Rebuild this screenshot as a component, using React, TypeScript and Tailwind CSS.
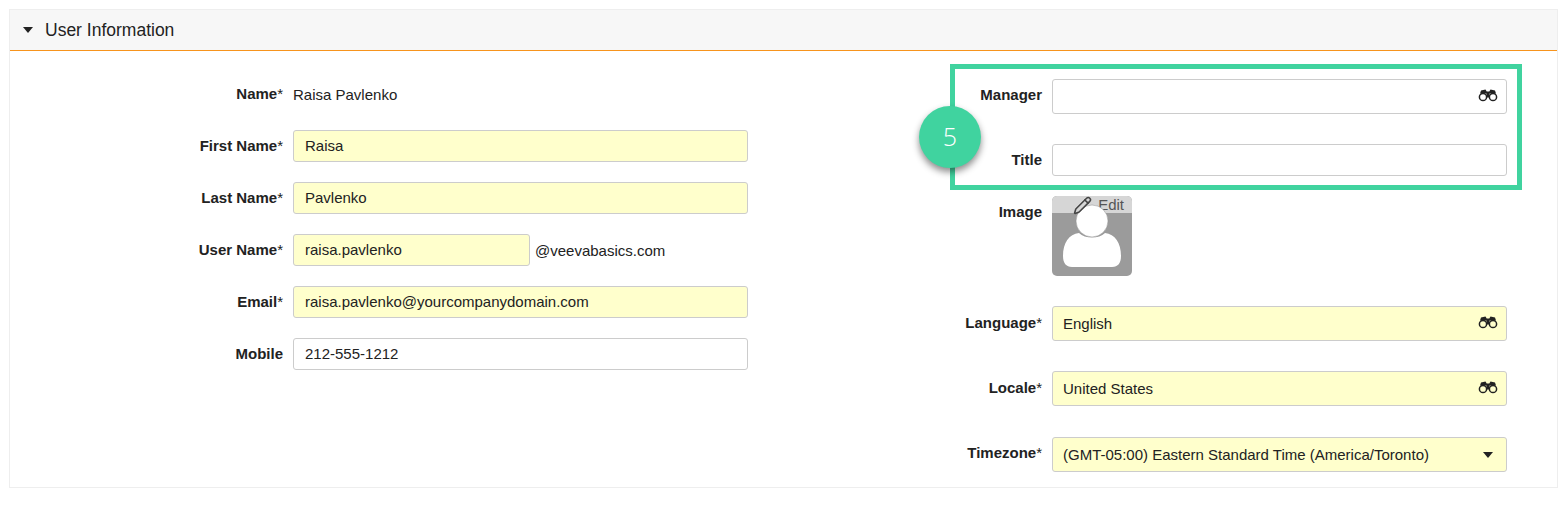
import React from "react";
import { Pencil } from "lucide-react";

function Binoculars() {
  return (
    <svg width="20" height="14" viewBox="0 0 20 14" className="absolute right-[8px] top-[9px] text-[#222]">
      <path d="M3 1.5 L7.5 0.5 L8.7 2.5 L11.3 2.5 L12.5 0.5 L17 1.5 L18 4.5 L2 4.5 Z" fill="currentColor" />
      <rect x="8.5" y="4" width="3" height="4.5" fill="currentColor" />
      <circle cx="5" cy="8" r="3.6" fill="none" stroke="currentColor" strokeWidth="1.5" />
      <circle cx="15" cy="8" r="3.6" fill="none" stroke="currentColor" strokeWidth="1.5" />
    </svg>
  );
}

function Caret() {
  return <span className="absolute right-[13px] top-[14px] w-0 h-0 border-x-[5px] border-x-transparent border-t-[6px] border-t-[#222]" />;
}

function Label({ text, required, width, shift = "pb-[2px]" }: { text: string; required?: boolean; width: string; shift?: string }) {
  return (
    <div className={`${width} ${shift} shrink-0 text-right text-[15px] leading-[20px]`}>
      <span className="font-bold">{text}</span>
      {required && "*"}
    </div>
  );
}

function Field({ value, required, height, width = "w-[455px]", inset = "pl-[10px]", icon }: {
  value?: string;
  required?: boolean;
  height: string;
  width?: string;
  inset?: string;
  icon?: React.ReactNode;
}) {
  return (
    <div className={`relative ${width} ${height} ${inset} flex items-center pr-[10px] pt-[1px] border border-[#ccc] rounded-[3px] text-[15px] ${required ? "bg-[#ffffcc]" : "bg-white"}`}>
      {value}
      {icon}
    </div>
  );
}

function LeftRow({ label, required, children }: { label: string; required?: boolean; children: React.ReactNode }) {
  return (
    <div className="flex items-center gap-[10px] h-[32px]">
      <Label text={label} required={required} width="w-[273px]" shift="pb-0" />
      {children}
    </div>
  );
}

function RightRow({ label, required, shift, children }: { label: string; required?: boolean; shift?: string; children: React.ReactNode }) {
  return (
    <div className="flex items-center gap-[10px]">
      <Label text={label} required={required} width="w-[87px]" shift={shift} />
      {children}
    </div>
  );
}

export default function App() {
  return (
    <div className="bg-white h-[505px] pt-[9px] px-[9px] text-[#222] font-['Liberation_Sans',Arial,sans-serif]">
      <div className="w-[1549px] h-[479px] border border-[#eeeeee]">
        <div className="h-[41px] bg-[#f7f7f7] border-b border-[#f7941d] flex items-center pl-[13px]">
          <span className="w-0 h-0 border-x-[5px] border-x-transparent border-t-[6px] border-t-[#222]" />
          <span className="ml-[12px] text-[17.5px]">User Information</span>
        </div>

        <div className="flex">
          <div className="flex flex-col gap-[20px] pt-[27px]">
            <LeftRow label="Name" required>
              <span className="text-[15px] pt-[3px]">Raisa Pavlenko</span>
            </LeftRow>
            <LeftRow label="First Name" required>
              <Field value="Raisa" required height="h-[32px]" inset="pl-[11px]" />
            </LeftRow>
            <LeftRow label="Last Name" required>
              <Field value="Pavlenko" required height="h-[32px]" inset="pl-[11px]" />
            </LeftRow>
            <LeftRow label="User Name" required>
              <Field value="raisa.pavlenko" required height="h-[32px]" width="w-[237px]" inset="pl-[11px]" />
              <span className="-ml-[5px] text-[15px] pt-[3px]">@veevabasics.com</span>
            </LeftRow>
            <LeftRow label="Email" required>
              <Field value="raisa.pavlenko@yourcompanydomain.com" required height="h-[32px]" inset="pl-[11px]" />
            </LeftRow>
            <LeftRow label="Mobile">
              <Field value="212-555-1212" height="h-[32px]" inset="pl-[11px]" />
            </LeftRow>
          </div>

          <div className="ml-[202px] pt-[13px] w-[572px]">
            <div className="relative border-[5px] border-[#40d39f] pt-[10px] pb-[9px] flex flex-col gap-[30px]">
              <RightRow label="Manager" shift="pb-[4px]">
                <Field height="h-[35px]" icon={<Binoculars />} />
              </RightRow>
              <RightRow label="Title" shift="pb-0">
                <Field height="h-[32px]" />
              </RightRow>
              <div className="absolute left-[-36px] top-[37px] w-[62px] h-[62px] rounded-full bg-[#40d39f] text-white text-[25px] font-light font-['Open_Sans',sans-serif] flex items-center justify-center shadow-[0_4px_7px_rgba(0,0,0,0.45)]">
                5
              </div>
            </div>

            <div className="px-[5px] pt-[6px] flex flex-col gap-[30px]">
              <div className="flex gap-[10px] h-[80px]">
                <div className="pt-[6px]">
                  <Label text="Image" width="w-[87px]" />
                </div>
                <div className="relative w-[80px] h-[80px] rounded-[5px] overflow-hidden bg-[#9b9b9b]">
                  <div className="h-[17px] bg-[#d6d6d6] flex justify-end items-center pr-[8px] pt-[1px] text-[15px] text-[#555]">
                    Edit
                  </div>
                  <svg width="80" height="80" viewBox="0 0 80 80" className="absolute left-0 top-0">
                    <circle cx="40" cy="25" r="16" fill="#fff" stroke="#8a8a8a" strokeWidth="0.5" />
                    <path d="M11 60 C11 47 17 38 27 37 C33 43 47 43 53 37 C63 38 69 47 69 60 C69 67 66 71 60 71 L20 71 C14 71 11 67 11 60 Z" fill="#fff" />
                  </svg>
                  <Pencil size={19} strokeWidth={2} className="absolute left-[21px] top-0 text-[#444]" />
                </div>
              </div>
              <RightRow label="Language" required>
                <Field value="English" required height="h-[35px]" icon={<Binoculars />} />
              </RightRow>
              <RightRow label="Locale" required>
                <Field value="United States" required height="h-[35px]" icon={<Binoculars />} />
              </RightRow>
              <div className="pt-[1px]">
                <RightRow label="Timezone" required shift="pb-[4px]">
                  <Field value="(GMT-05:00) Eastern Standard Time (America/Toronto)" required height="h-[35px]" icon={<Caret />} />
                </RightRow>
              </div>
            </div>
          </div>
        </div>
      </div>
    </div>
  );
}
